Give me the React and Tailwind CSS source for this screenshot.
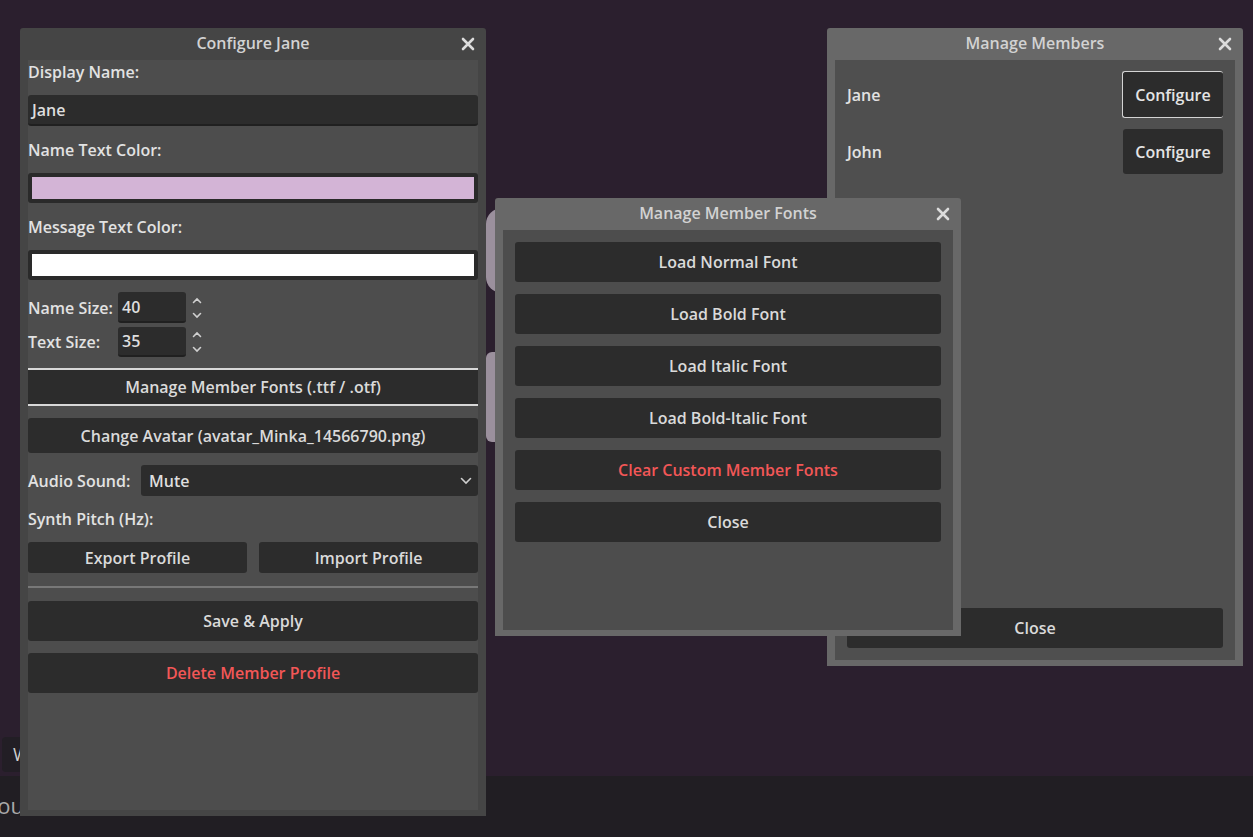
import React from 'react';

const font = { fontFamily: '"Open Sans", "Noto Sans", sans-serif' };

function CloseX() {
	return (
		<svg width="14" height="14" viewBox="0 0 14 14" className="block">
			<path d="M2 2 L12 12 M12 2 L2 12" stroke="#dcdcdc" strokeWidth="2.6" strokeLinecap="round" />
		</svg>
	);
}

function Window({ title, frame, inner, className, children }) {
	return (
		<div className={`absolute flex flex-col rounded-t-[3px] ${frame} ${className}`}>
			<div className="relative h-[32px] shrink-0 flex items-center justify-center">
				<span className="text-[16px] font-semibold text-[#d2d2d2] -mt-[2px]">{title}</span>
				<span className="absolute right-[11px] top-[9px]"><CloseX /></span>
			</div>
			<div className={`flex-1 mx-[8px] mb-[6px] ${inner}`}>{children}</div>
		</div>
	);
}

function Btn({ children, className, red }) {
	return (
		<div
			className={`flex items-center justify-center rounded-[3px] bg-[#2c2c2c] text-[16px] font-semibold ${red ? 'text-[#f25757]' : 'text-[#dadada]'} ${className || ''}`}
		>
			{children}
		</div>
	);
}

function Spin({ value }) {
	return (
		<div className="flex items-center h-full">
			<div className="w-[68px] h-full rounded-[3px] bg-[#2c2c2c] border-b-2 border-[#202020] flex items-center pl-[4px] text-[#dedede]">
				{value}
			</div>
			<svg width="12" height="26" viewBox="0 0 12 26" className="ml-[5px]">
				<path d="M2.5 7.5 L6 4 L9.5 7.5" fill="none" stroke="#d0d0d0" strokeWidth="1.6" strokeLinecap="round" />
				<path d="M2.5 18.5 L6 22 L9.5 18.5" fill="none" stroke="#d0d0d0" strokeWidth="1.6" strokeLinecap="round" />
			</svg>
		</div>
	);
}

function ConfigureJane() {
	return (
		<Window
			title="Configure Jane"
			frame="bg-[#454545]"
			inner="bg-[#4d4d4d]"
			className="left-[20px] top-[28px] w-[466px] h-[788px]"
		>
			<div className="flex flex-col gap-[12px] text-[16px] font-semibold text-[#e2e2e2]">
				<div className="h-[23px] flex items-center">Display Name:</div>
				<div className="h-[31px] rounded-[3px] bg-[#2c2c2c] border-b-2 border-[#202020] flex items-center pl-[4px] text-[#dedede]">
					Jane
				</div>
				<div className="h-[23px] flex items-center">Name Text Color:</div>
				<div className="h-[30px] rounded-[3px] bg-[#2a2a2a] p-[4px]">
					<div className="w-full h-full bg-[#d3b4d6]" />
				</div>
				<div className="h-[23px] flex items-center">Message Text Color:</div>
				<div className="h-[30px] rounded-[3px] bg-[#2a2a2a] p-[4px]">
					<div className="w-full h-full bg-white" />
				</div>
				<div className="flex flex-col gap-[4px]">
					<div className="h-[31px] flex items-center">
						<span className="w-[90px]">Name Size:</span>
						<Spin value="40" />
					</div>
					<div className="h-[30px] flex items-center">
						<span className="w-[90px]">Text Size:</span>
						<Spin value="35" />
					</div>
				</div>
				<Btn className="h-[38px] -mt-[1px] rounded-none border-y-2 border-[#d8d8d8]">Manage Member Fonts (.ttf / .otf)</Btn>
				<Btn className="h-[35px]">Change Avatar (avatar_Minka_14566790.png)</Btn>
				<div className="h-[31px] flex items-center">
					<span className="w-[113px]">Audio Sound:</span>
					<div className="flex-1 h-full rounded-[3px] bg-[#2c2c2c] flex items-center justify-between pl-[8px] pr-[6px] text-[#dedede]">
						<span>Mute</span>
						<svg width="12" height="8" viewBox="0 0 12 8">
							<path d="M1.5 1.5 L6 6 L10.5 1.5" fill="none" stroke="#cfcfcf" strokeWidth="1.6" strokeLinecap="round" />
						</svg>
					</div>
				</div>
				<div className="h-[22px] flex items-center">Synth Pitch (Hz):</div>
				<div className="h-[31px] flex gap-[12px]">
					<Btn className="flex-1">Export Profile</Btn>
					<Btn className="flex-1">Import Profile</Btn>
				</div>
				<div className="h-[2px] mt-[1px] bg-[#787878]" />
				<Btn className="h-[40px] mt-[1px]">Save &amp; Apply</Btn>
				<Btn className="h-[40px]" red>Delete Member Profile</Btn>
			</div>
		</Window>
	);
}

function ManageMembers() {
	return (
		<Window
			title="Manage Members"
			frame="bg-[#686868]"
			inner="bg-[#4f4f4f]"
			className="left-[827px] top-[28px] w-[416px] h-[638px]"
		>
			<div className="h-full flex flex-col px-[12px] pt-[11px] pb-[12px] text-[16px] font-semibold text-[#e2e2e2]">
				<div className="flex flex-col gap-[11px]">
					<div className="h-[47px] flex items-center justify-between">
						<span>Jane</span>
						<Btn className="w-[101px] h-full border border-r-0 border-[#d4d4d4] text-[#e4e4e4]">Configure</Btn>
					</div>
					<div className="h-[45px] flex items-center justify-between">
						<span>John</span>
						<Btn className="w-[100px] h-full text-[#e4e4e4]">Configure</Btn>
					</div>
				</div>
				<div className="flex-1" />
				<Btn className="h-[40px]">Close</Btn>
			</div>
		</Window>
	);
}

function MemberFonts() {
	const items = ['Load Normal Font', 'Load Bold Font', 'Load Italic Font', 'Load Bold-Italic Font'];
	return (
		<Window
			title="Manage Member Fonts"
			frame="bg-[#686868]"
			inner="bg-[#4d4d4d]"
			className="left-[495px] top-[198px] w-[466px] h-[438px]"
		>
			<div className="flex flex-col gap-[12px] p-[12px]">
				{items.map(t => (
					<Btn key={t} className="h-[40px]">{t}</Btn>
				))}
				<Btn className="h-[40px]" red>Clear Custom Member Fonts</Btn>
				<Btn className="h-[40px]">Close</Btn>
			</div>
		</Window>
	);
}

export default function App() {
	return (
		<div className="relative w-[1253px] h-[837px] overflow-hidden bg-[#2b1f2e] flex flex-col" style={font}>
			<div className="flex-1 flex flex-col justify-end pb-[4px] pl-[2px]">
				<div className="w-[60px] h-[35px] rounded-[4px] bg-[#221e25] flex items-center pl-[11px] text-[18px] text-[#d0d0d0]">
					W
				</div>
			</div>
			<div className="h-[61px] bg-[#211e23] flex items-center text-[22px] text-[#a9a9a9]">
				<span className="-ml-[15px] -mt-[2px]">You</span>
			</div>

			{/* chat bubbles peeking behind the windows */}
			<div className="absolute left-[486px] top-[208px] w-[40px] h-[85px] rounded-l-[16px] bg-[#9b909d]" />
			<div className="absolute left-[486px] top-[352px] w-[40px] h-[90px] rounded-l-[6px] bg-[#9b909d]" />

			<ConfigureJane />
			<ManageMembers />
			<MemberFonts />
		</div>
	);
}
